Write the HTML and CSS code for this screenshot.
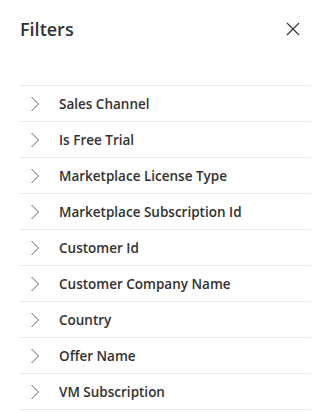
FILE: index.html
```html
<!DOCTYPE html>
<html lang="en">
<head>
  <meta charset="UTF-8">
  <title>Filters</title>
  <link rel="stylesheet" href="styles.css">
</head>
<body>
  <div class="panel">
    <div class="panel-header">
      <h2 class="panel-title">Filters</h2>
      <button class="close-button" aria-label="Close">
        <svg width="14" height="14" viewBox="0 0 14 14">
          <path d="M1 1 L13 13 M13 1 L1 13" stroke="#323130" stroke-width="1.1" fill="none"/>
        </svg>
      </button>
    </div>

    <ul class="filter-list">
      <li class="filter-item"><span class="chevron"><svg width="10" height="16" viewBox="0 0 10 16"><path d="M1.5 1 L8.5 8 L1.5 15" stroke="#605e5c" stroke-width="1" fill="none"/></svg></span>Sales Channel</li>
      <li class="filter-item"><span class="chevron"><svg width="10" height="16" viewBox="0 0 10 16"><path d="M1.5 1 L8.5 8 L1.5 15" stroke="#605e5c" stroke-width="1" fill="none"/></svg></span>Is Free Trial</li>
      <li class="filter-item"><span class="chevron"><svg width="10" height="16" viewBox="0 0 10 16"><path d="M1.5 1 L8.5 8 L1.5 15" stroke="#605e5c" stroke-width="1" fill="none"/></svg></span>Marketplace License Type</li>
      <li class="filter-item"><span class="chevron"><svg width="10" height="16" viewBox="0 0 10 16"><path d="M1.5 1 L8.5 8 L1.5 15" stroke="#605e5c" stroke-width="1" fill="none"/></svg></span>Marketplace Subscription Id</li>
      <li class="filter-item"><span class="chevron"><svg width="10" height="16" viewBox="0 0 10 16"><path d="M1.5 1 L8.5 8 L1.5 15" stroke="#605e5c" stroke-width="1" fill="none"/></svg></span>Customer Id</li>
      <li class="filter-item"><span class="chevron"><svg width="10" height="16" viewBox="0 0 10 16"><path d="M1.5 1 L8.5 8 L1.5 15" stroke="#605e5c" stroke-width="1" fill="none"/></svg></span>Customer Company Name</li>
      <li class="filter-item"><span class="chevron"><svg width="10" height="16" viewBox="0 0 10 16"><path d="M1.5 1 L8.5 8 L1.5 15" stroke="#605e5c" stroke-width="1" fill="none"/></svg></span>Country</li>
      <li class="filter-item"><span class="chevron"><svg width="10" height="16" viewBox="0 0 10 16"><path d="M1.5 1 L8.5 8 L1.5 15" stroke="#605e5c" stroke-width="1" fill="none"/></svg></span>Offer Name</li>
      <li class="filter-item"><span class="chevron"><svg width="10" height="16" viewBox="0 0 10 16"><path d="M1.5 1 L8.5 8 L1.5 15" stroke="#605e5c" stroke-width="1" fill="none"/></svg></span>VM Subscription</li>
    </ul>
  </div>
</body>
</html>
```

FILE: styles.css
```css
body {
  margin: 0;
  background: #ffffff;
  font-family: 'Open Sans', 'Noto Sans', sans-serif;
  color: #323130;
}

.panel {
  padding: 0 16px 0 19px;
}

.panel-header {
  display: flex;
  align-items: center;
  justify-content: space-between;
  height: 58px;
  padding-left: 1px;
}

.panel-title {
  margin: 0;
  font-size: 18px;
  font-weight: 600;
  color: #323130;
}

.close-button {
  background: none;
  border: none;
  padding: 0;
  width: 14px;
  height: 14px;
  margin-right: 11px;
  cursor: pointer;
  display: flex;
}

.filter-list {
  list-style: none;
  margin: 27px 0 0;
  padding: 0;
  border-top: 1px solid #edebe9;
}

.filter-item {
  display: flex;
  align-items: center;
  height: 35px;
  border-bottom: 1px solid #edebe9;
  font-size: 13.5px;
  font-weight: 600;
  color: #323130;
}

.chevron {
  display: flex;
  width: 40px;
  padding-left: 11px;
  box-sizing: border-box;
}
```
